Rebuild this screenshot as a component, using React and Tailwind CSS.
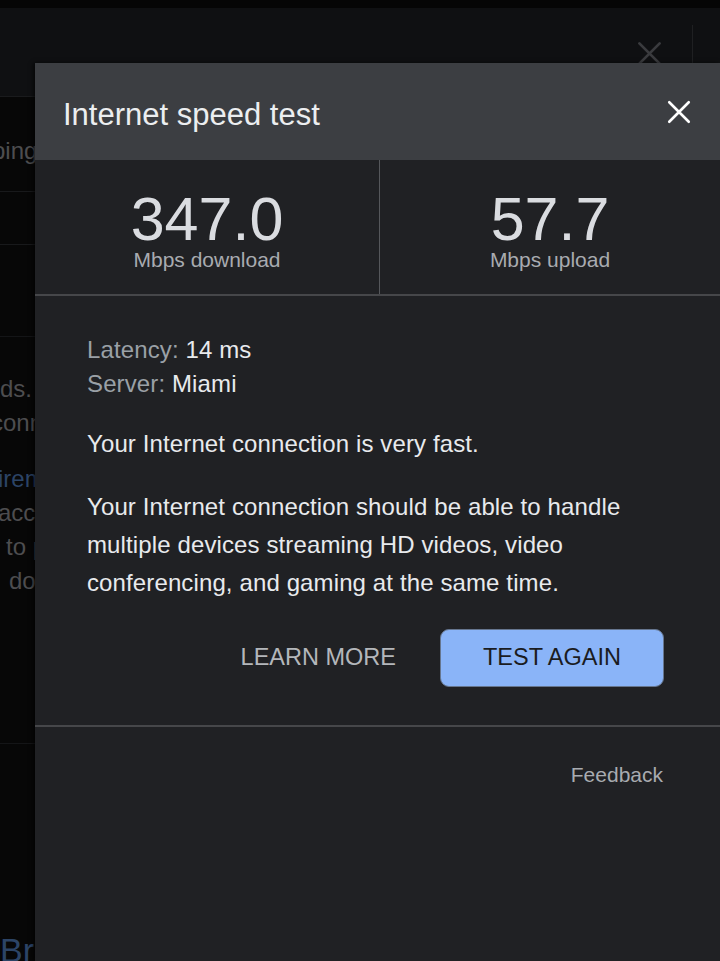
import React from 'react';

const font = "font-['Liberation_Sans','Helvetica_Neue',Arial,sans-serif]";

const CloseIcon = ({ className }) => (
  <svg viewBox="0 0 24 24" className={className} fill="none" stroke="currentColor" strokeWidth="2.4" strokeLinecap="round">
    <path d="M3 3 L21 21 M21 3 L3 21" />
  </svg>
);

const Backdrop = () => (
  <div className="flex flex-col h-full text-[24px] text-[#4d4d4f]">
    <div className="h-[8px] bg-[#050505]" />
    <div className="h-[89px] bg-[#0f1012] border-b border-[#1a1b1d] flex items-start justify-end">
      <CloseIcon className="w-[27px] h-[27px] text-[#3a3b3e] mt-[32px] mr-[29px]" />
      <div className="w-px h-[38px] mt-[17px] mr-[27px] bg-[#1f2022]" />
    </div>
    <div className="flex-1 bg-[#070707] flex flex-col">
      <div className="h-[95px] border-b border-[#18191b] pt-[42px]">
        <div className="whitespace-nowrap leading-none -ml-[8px]">ping</div>
      </div>
      <div className="h-[53px] border-b border-[#18191b]" />
      <div className="h-[92px] border-b border-[#141517]" />
      <div className="pt-[35px] leading-[34px]">
        <div className="whitespace-nowrap">ds.</div>
        <div className="whitespace-nowrap -ml-[9px]">connection</div>
      </div>
      <div className="pt-[22px] leading-[34px]">
        <div className="whitespace-nowrap -ml-[2px] text-[#2c4466]">irements</div>
        <div className="whitespace-nowrap -ml-[2px]">access</div>
        <div className="whitespace-nowrap ml-[6px]">to provide</div>
        <div className="whitespace-nowrap ml-[9px]">doing</div>
      </div>
      <div className="mt-[145px] border-b border-[#141517]" />
      <div className="flex-1 flex items-end">
        <div className="whitespace-nowrap text-[34px] leading-none -mb-[6px] text-[#2c4466]">Browse</div>
      </div>
    </div>
  </div>
);

const Stat = ({ value, label, border }) => (
  <div className={`flex flex-col items-center pt-[29px] ${border ? 'border-r border-[#55575b]' : ''}`}>
    <div className="text-[61px] leading-none text-[#dadce0]">{value}</div>
    <div className="text-[21px] leading-none text-[#a8abb0] -mt-[1px]">{label}</div>
  </div>
);

export default function App() {
  return (
    <div className={`relative w-full h-[961px] overflow-hidden ${font}`}>
      <Backdrop />

      <div className="absolute left-[35px] top-[63px] right-0 bottom-0 bg-[#202124] flex flex-col shadow-[-2px_0_4px_rgba(0,0,0,0.6)]">
        <div className="h-[97px] shrink-0 bg-[#3c3e42] flex items-center justify-between pl-[28px] pr-[28px]">
          <h1 className="text-[31px] text-[#eceef0] leading-none mt-[6px]">Internet speed test</h1>
          <CloseIcon className="w-[26px] h-[26px] text-white" />
        </div>

        <div className="grid grid-cols-[345px_1fr] h-[136px] shrink-0 border-b-2 border-[#46474a]">
          <Stat value="347.0" label="Mbps download" border />
          <Stat value="57.7" label="Mbps upload" />
        </div>

        <div className="pl-[52px] pr-[56px] pt-[37px] text-[24px] tracking-[0.12px] text-[#e8eaed]">
          <div className="leading-[34px]">
            <div><span className="text-[#9aa0a6]">Latency:</span> 14 ms</div>
            <div><span className="text-[#9aa0a6]">Server:</span> Miami</div>
          </div>
          <p className="leading-[37px] mt-[24px]">Your Internet connection is very fast.</p>
          <p className="leading-[38px] mt-[26px]">
            Your Internet connection should be able to handle<br />
            multiple devices streaming HD videos, video<br />
            conferencing, and gaming at the same time.
          </p>
          <div className="flex justify-end items-center gap-[44px] mt-[27px] tracking-normal">
            <button className="text-[23.5px] text-[#b4b7bb] leading-none">LEARN MORE</button>
            <button className="w-[224px] h-[58px] rounded-[9px] bg-[#8ab4f8] border border-[#66768f] text-[23.5px] text-[#1b1c1f] leading-none">
              TEST AGAIN
            </button>
          </div>
        </div>

        <div className="mt-[38px] border-t-2 border-[#46474a]" />
        <div className="flex justify-end pr-[57px] pt-[37px]">
          <span className="text-[21px] leading-none text-[#a8abb0]">Feedback</span>
        </div>
      </div>
    </div>
  );
}
